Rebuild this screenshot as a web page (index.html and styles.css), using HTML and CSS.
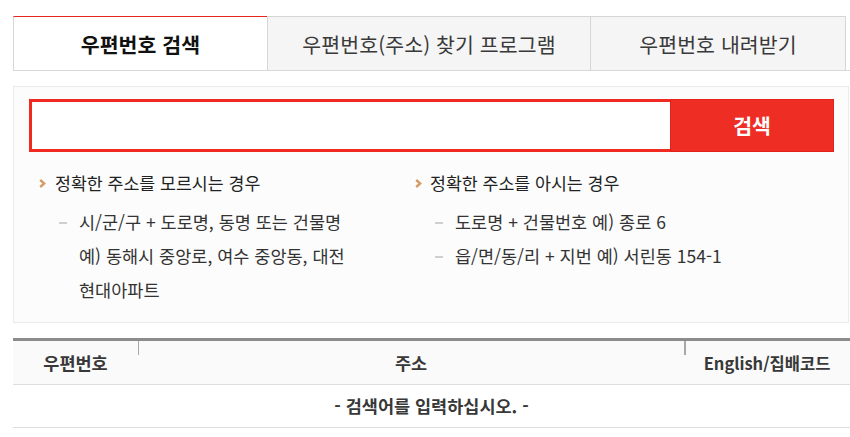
FILE: index.html
```html
<!DOCTYPE html>
<html lang="ko">
<head>
<meta charset="utf-8">
<title>우편번호 검색</title>
<link rel="stylesheet" href="styles.css">
</head>
<body>
<div class="page">
  <ul class="tabs">
    <li class="tab tab-1 active">우편번호 검색</li>
    <li class="tab tab-2">우편번호(주소) 찾기 프로그램</li>
    <li class="tab tab-3">우편번호 내려받기</li>
  </ul>

  <section class="search-box">
    <form class="search" onsubmit="return false;">
      <input class="search-input" type="text" aria-label="검색어">
      <button class="search-btn" type="submit">검색</button>
    </form>
    <div class="guides">
      <div class="guide guide-left">
        <p class="guide-title"><svg class="chev" width="7" height="9" viewBox="0 0 7 9"><polyline points="1.2,1 5.2,4.5 1.2,8" fill="none" stroke="#d79b66" stroke-width="2.4"/></svg>정확한 주소를 모르시는 경우</p>
        <ul class="guide-list">
          <li>시/군/구 + 도로명, 동명 또는 건물명<br>예) 동해시 중앙로, 여수 중앙동, 대전 현대아파트</li>
        </ul>
      </div>
      <div class="guide guide-right">
        <p class="guide-title"><svg class="chev" width="7" height="9" viewBox="0 0 7 9"><polyline points="1.2,1 5.2,4.5 1.2,8" fill="none" stroke="#d79b66" stroke-width="2.4"/></svg>정확한 주소를 아시는 경우</p>
        <ul class="guide-list">
          <li>도로명 + 건물번호 예) 종로 6</li>
          <li>읍/면/동/리 + 지번 예) 서린동 154-1</li>
        </ul>
      </div>
    </div>
  </section>

  <table class="results">
    <colgroup>
      <col class="col-zip">
      <col class="col-addr">
      <col class="col-eng">
    </colgroup>
    <thead>
      <tr>
        <th class="th-zip">우편번호</th>
        <th class="th-addr">주소</th>
        <th class="th-eng">English/집배코드</th>
      </tr>
    </thead>
    <tbody>
      <tr>
        <td class="empty" colspan="3">- 검색어를 입력하십시오. -</td>
      </tr>
    </tbody>
  </table>
</div>
</body>
</html>
```

FILE: styles.css
```css
* { box-sizing: border-box; }

body {
  margin: 0;
  padding: 16px 0 0 13px;
  background: #fff;
  font-family: "Noto Sans CJK KR", "Noto Sans", sans-serif;
  color: #222;
}

.page { width: 837px; }

/* tabs */
.tabs {
  display: flex;
  list-style: none;
  margin: 0;
  padding: 0;
  border-bottom: 1px solid #d8d8d8;
}
.tab {
  height: 54px;
  display: flex;
  align-items: center;
  justify-content: center;
  background: #f5f5f5;
  border-top: 1px solid #d6d6d6;
  border-left: 1px solid #d6d6d6;
  font-size: 20.5px;
  color: #3a3a3a;
  letter-spacing: 0.1px;
}
.tab-1 { width: 254px; }
.tab-2 { width: 323px; }
.tab-3 { width: 256px; border-right: 1px solid #d6d6d6; }
.tab.active {
  background: #fff;
  border-top-color: #e8261f;
  font-weight: 700;
  color: #111;
}

/* search box */
.search-box {
  margin-top: 15px;
  width: 836px;
  border: 1px solid #ebebeb;
  background: #fcfcfc;
  padding: 12px 14px 15px 15px;
}
.search {
  display: flex;
  height: 53px;
  margin: 0;
}
.search-input {
  flex: 1;
  min-width: 0;
  border: 3px solid #f02a21;
  border-right: 0;
  background: #fff;
  outline: none;
  font-size: 16px;
  padding: 0 12px;
}
.search-btn {
  width: 164px;
  border: 1px solid #e4221a;
  background: #ee2d24;
  color: #fff;
  font-family: inherit;
  font-size: 20.5px;
  font-weight: 700;
  padding: 0 0 2px;
}

.guides {
  display: grid;
  grid-template-columns: 386px 1fr;
  margin-top: 19px;
}
.guide-left { padding-left: 10px; }
.guide-right { padding-left: 0; }

.guide-title {
  display: flex;
  align-items: center;
  margin: 0;
  height: 24px;
  font-size: 17.3px;
  line-height: 24px;
  color: #222;
}
.chev { flex: none; margin-right: 9px; margin-top: 1px; }
.guide-right .chev { margin-right: 8px; }

.guide-list {
  list-style: none;
  margin: 10px 0 0;
  padding: 0 0 0 20px;
  max-width: 330px;
}
.guide-list li {
  display: flex;
  gap: 12px;
  font-size: 17.5px;
  line-height: 34px;
  color: #333;
  word-break: keep-all;
}
.guide-list li::before {
  content: "";
  flex: none;
  width: 8px;
  height: 2px;
  margin-top: 17px;
  background: #cfcfcf;
}

/* results */
.results {
  margin-top: 15px;
  width: 837px;
  border-collapse: collapse;
  table-layout: fixed;
}
.col-zip { width: 125px; }
.col-addr { width: 546px; }
.col-eng { width: 166px; }

.results th {
  height: 45px;
  border-top: 3px solid #8c8c8c;
  border-bottom: 1px solid #dedede;
  background: #fafafa;
  font-size: 17.5px;
  font-weight: 700;
  color: #383838;
  padding: 0;
}
.results .th-eng { font-size: 16.5px; }
.results .th-addr {
  background: linear-gradient(#a8a8a8, #a8a8a8) left top / 1px 14px no-repeat, #fafafa;
}
.results .th-eng {
  background: linear-gradient(#a8a8a8, #a8a8a8) left top / 2px 14px no-repeat, #fafafa;
}
.results td.empty {
  height: 43px;
  border-bottom: 1px solid #dedede;
  text-align: center;
  font-size: 17.5px;
  font-weight: 700;
  color: #383838;
  padding: 0 0 2px 0;
}
```
